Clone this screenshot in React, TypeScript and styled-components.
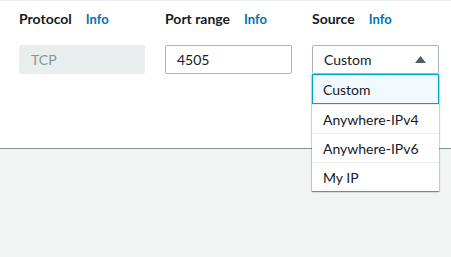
import styled, { createGlobalStyle } from 'styled-components';

const GlobalStyle = createGlobalStyle`
  html, body {
    margin: 0;
    padding: 0;
    background: #f2f3f3;
    font-family: Lato, "Open Sans", sans-serif;
  }
`;

const Page = styled.div`
  width: 451px;
  height: 257px;
  display: flex;
  flex-direction: column;
  background: #f2f3f3;
  overflow: hidden;
`;

const Panel = styled.div`
  box-sizing: border-box;
  height: 149px;
  flex-shrink: 0;
  background: #ffffff;
  border-top: 1px solid #eaeded;
  border-bottom: 1px solid #879596;
  padding: 9px 12px 0 19px;
  display: flex;
  gap: 20px;
  position: relative;
  z-index: 1;
`;

const Field = styled.div<{ w?: number }>`
  width: ${p => p.w ?? 127}px;
  flex-shrink: 0;
  display: flex;
  flex-direction: column;
  position: relative;
`;

const LabelRow = styled.div`
  display: flex;
  align-items: baseline;
  gap: 14px;
  height: 20px;
  margin-bottom: 15px;
`;

const Label = styled.span`
  font-size: 14px;
  font-weight: 700;
  color: #16191f;
`;

const Info = styled.a`
  font-size: 13px;
  font-weight: 700;
  color: #0073bb;
  text-decoration: none;
`;

const Input = styled.div<{ disabled?: boolean }>`
  box-sizing: border-box;
  height: 29px;
  border-radius: 2px;
  padding: 0 11px;
  display: flex;
  align-items: center;
  font-size: 14px;
  color: ${p => (p.disabled ? '#879596' : '#16191f')};
  background: ${p => (p.disabled ? '#eaeded' : '#ffffff')};
  border: 1px solid ${p => (p.disabled ? '#eaeded' : '#aab7b8')};
`;

const Select = styled(Input)`
  justify-content: space-between;
`;

const Caret = styled.svg`
  width: 11px;
  height: 7px;
  margin-right: 1px;
`;

const Menu = styled.ul`
  position: absolute;
  top: 64px;
  left: 0;
  width: 127px;
  margin: 0;
  padding: 0;
  list-style: none;
  background: #ffffff;
  box-shadow: 0 1px 1px 0 rgba(0, 28, 36, 0.3), 1px 1px 1px 0 rgba(0, 28, 36, 0.15),
    -1px 1px 1px 0 rgba(0, 28, 36, 0.15);
`;

const Option = styled.li<{ selected?: boolean }>`
  box-sizing: border-box;
  height: ${p => (p.selected ? '30px' : '29px')};
  display: flex;
  align-items: center;
  font-size: 14px;
  color: #16191f;
  background: ${p => (p.selected ? '#f1faff' : '#ffffff')};
  border: ${p => (p.selected ? '1px solid #00a1c9' : 'none')};
  border-top: ${p => (p.selected ? '1px solid #00a1c9' : '1px solid #eaeded')};
  padding-left: ${p => (p.selected ? '10px' : '11px')};
`;

const Footer = styled.div`
  flex: 1;
  background: #f2f3f3;
`;

const options = ['Custom', 'Anywhere-IPv4', 'Anywhere-IPv6', 'My IP'];

export default function App() {
  return (
    <Page>
      <GlobalStyle />
      <Panel>
        <Field w={126}>
          <LabelRow>
            <Label>Protocol</Label>
            <Info>Info</Info>
          </LabelRow>
          <Input disabled>TCP</Input>
        </Field>
        <Field>
          <LabelRow>
            <Label>Port range</Label>
            <Info>Info</Info>
          </LabelRow>
          <Input>4505</Input>
        </Field>
        <Field>
          <LabelRow>
            <Label>Source</Label>
            <Info>Info</Info>
          </LabelRow>
          <Select>
            Custom
            <Caret viewBox="0 0 11 7">
              <polygon points="5.5,0 11,7 0,7" fill="#545b64" />
            </Caret>
          </Select>
          <Menu>
            {options.map((o, i) => (
              <Option key={o} selected={i === 0}>
                {o}
              </Option>
            ))}
          </Menu>
        </Field>
      </Panel>
      <Footer />
    </Page>
  );
}
